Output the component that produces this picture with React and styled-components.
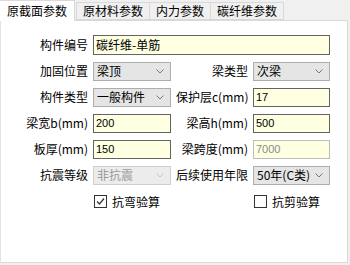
import React from "react";
import styled, { createGlobalStyle } from "styled-components";

const Global = createGlobalStyle`
  html, body { margin: 0; padding: 0; background: #f0f0f0; }
  body { font-family: "Noto Sans CJK SC", "Noto Sans", sans-serif; font-size: 12px; color: #000; }
`;

const Window = styled.div`
  width: 350px;
  height: 265px;
  background: #f0f0f0;
  display: flex;
  flex-direction: column;
`;

const TabBar = styled.div`
  display: flex;
  align-items: flex-end;
  height: 20px;
  position: relative;
  z-index: 1;
`;

const Tab = styled.div`
  box-sizing: border-box;
  flex: none;
  height: ${(p) => (p.$active ? "21px" : "18px")};
  margin-bottom: ${(p) => (p.$active ? "-1px" : "0")};
  padding: 0 ${(p) => (p.$active ? "7px" : "6px")};
  margin-left: ${(p) => (p.$active ? "0" : "-1px")};
  background: ${(p) => (p.$active ? "#fff" : "#f0f0f0")};
  border: 1px solid #d9d9d9;
  border-bottom: ${(p) => (p.$active ? "none" : "1px solid #d9d9d9")};
  border-left: ${(p) => (p.$active ? "none" : "1px solid #d9d9d9")};
  display: flex;
  align-items: center;
  font-size: 12px;
  line-height: 1;
  white-space: nowrap;
  &:nth-child(2) { margin-left: 1px; }
`;

const Panel = styled.div`
  box-sizing: border-box;
  width: 348px;
  height: 243px;
  background: #fff;
  border: 1px solid #d9d9d9;
  border-left-color: #e3e3e3;
  padding-top: 14px;
`;

const Form = styled.div`
  display: grid;
  grid-template-columns: 87px 78px 72px 77px;
  column-gap: 5px;
  grid-auto-rows: 20px;
  row-gap: 6px;
  align-items: center;
`;

const Label = styled.div`
  text-align: right;
  white-space: nowrap;
  font-size: 12px;
  line-height: 20px;
`;

const Input = styled.div`
  box-sizing: border-box;
  height: ${(p) => p.$h || 19}px;
  border: 1px solid ${(p) => (p.$disabled ? "#bdbdbd" : "#646464")};
  background: #ffffe1;
  color: ${(p) => (p.$disabled ? "#8c8c8c" : "#000")};
  font-family: ${(p) => (p.$num ? '"Liberation Sans", Arial, sans-serif' : '"Noto Sans CJK SC", sans-serif')};
  font-size: ${(p) => (p.$num ? "11px" : "12px")};
  padding-left: 2px;
  display: flex;
  align-items: center;
  line-height: 1;
  grid-column: ${(p) => p.$span || "auto"};
`;

const Select = styled.div`
  box-sizing: border-box;
  height: 19px;
  border: 1px solid #adadad;
  background: ${(p) => (p.$disabled ? "#ececec" : "#e5e5e5")};
  border-color: ${(p) => (p.$disabled ? "#cfcfcf" : "#adadad")};
  color: ${(p) => (p.$disabled ? "#9a9a9a" : "#000")};
  display: flex;
  align-items: center;
  justify-content: space-between;
  padding: 0 6px 0 3px;
  font-size: 12px;
  line-height: 1;
  white-space: nowrap;
`;

const Chevron = ({ light }) => (
  <svg width="8" height="5" viewBox="0 0 8 5">
    <polyline points="0.5,0.5 4,4 7.5,0.5" fill="none" stroke={light ? "#c4c4c4" : "#7a7a7a"} strokeWidth="1" />
  </svg>
);

const CheckRow = styled.div`
  display: flex;
  align-items: center;
  gap: 5px;
  font-size: 12px;
  padding-left: 1px;
`;

const Box = styled.div`
  box-sizing: border-box;
  width: 13px;
  height: 13px;
  border: 1px solid #333;
  background: #fff;
  display: flex;
  align-items: center;
  justify-content: center;
`;

const Check = ({ checked }) => (
  <Box>
    {checked && (
      <svg width="9" height="9" viewBox="0 0 9 9">
        <polyline points="1,4.5 3.5,7 8,1.5" fill="none" stroke="#333" strokeWidth="1.2" />
      </svg>
    )}
  </Box>
);

const Sel = ({ children, disabled }) => (
  <Select $disabled={disabled}>
    <span>{children}</span>
    <Chevron light={disabled} />
  </Select>
);

export default function App() {
  return (
    <Window>
      <Global />
      <TabBar>
        <Tab $active>原截面参数</Tab>
        <Tab>原材料参数</Tab>
        <Tab>内力参数</Tab>
        <Tab>碳纤维参数</Tab>
      </TabBar>
      <Panel>
        <Form>
          <Label>构件编号</Label>
          <Input $span="2 / 5" $h={20}>碳纤维-单筋</Input>

          <Label>加固位置</Label>
          <Sel>梁顶</Sel>
          <Label>梁类型</Label>
          <Sel>次梁</Sel>

          <Label>构件类型</Label>
          <Sel>一般构件</Sel>
          <Label>保护层c(mm)</Label>
          <Input $num>17</Input>

          <Label>梁宽b(mm)</Label>
          <Input $num>200</Input>
          <Label>梁高h(mm)</Label>
          <Input $num>500</Input>

          <Label>板厚(mm)</Label>
          <Input $num>150</Input>
          <Label>梁跨度(mm)</Label>
          <Input $num $disabled>7000</Input>

          <Label>抗震等级</Label>
          <Sel disabled>非抗震</Sel>
          <Label>后续使用年限</Label>
          <Sel>50年(C类)</Sel>

          <div />
          <CheckRow>
            <Check checked />
            <span>抗弯验算</span>
          </CheckRow>
          <div />
          <CheckRow>
            <Check />
            <span>抗剪验算</span>
          </CheckRow>
        </Form>
      </Panel>
    </Window>
  );
}
